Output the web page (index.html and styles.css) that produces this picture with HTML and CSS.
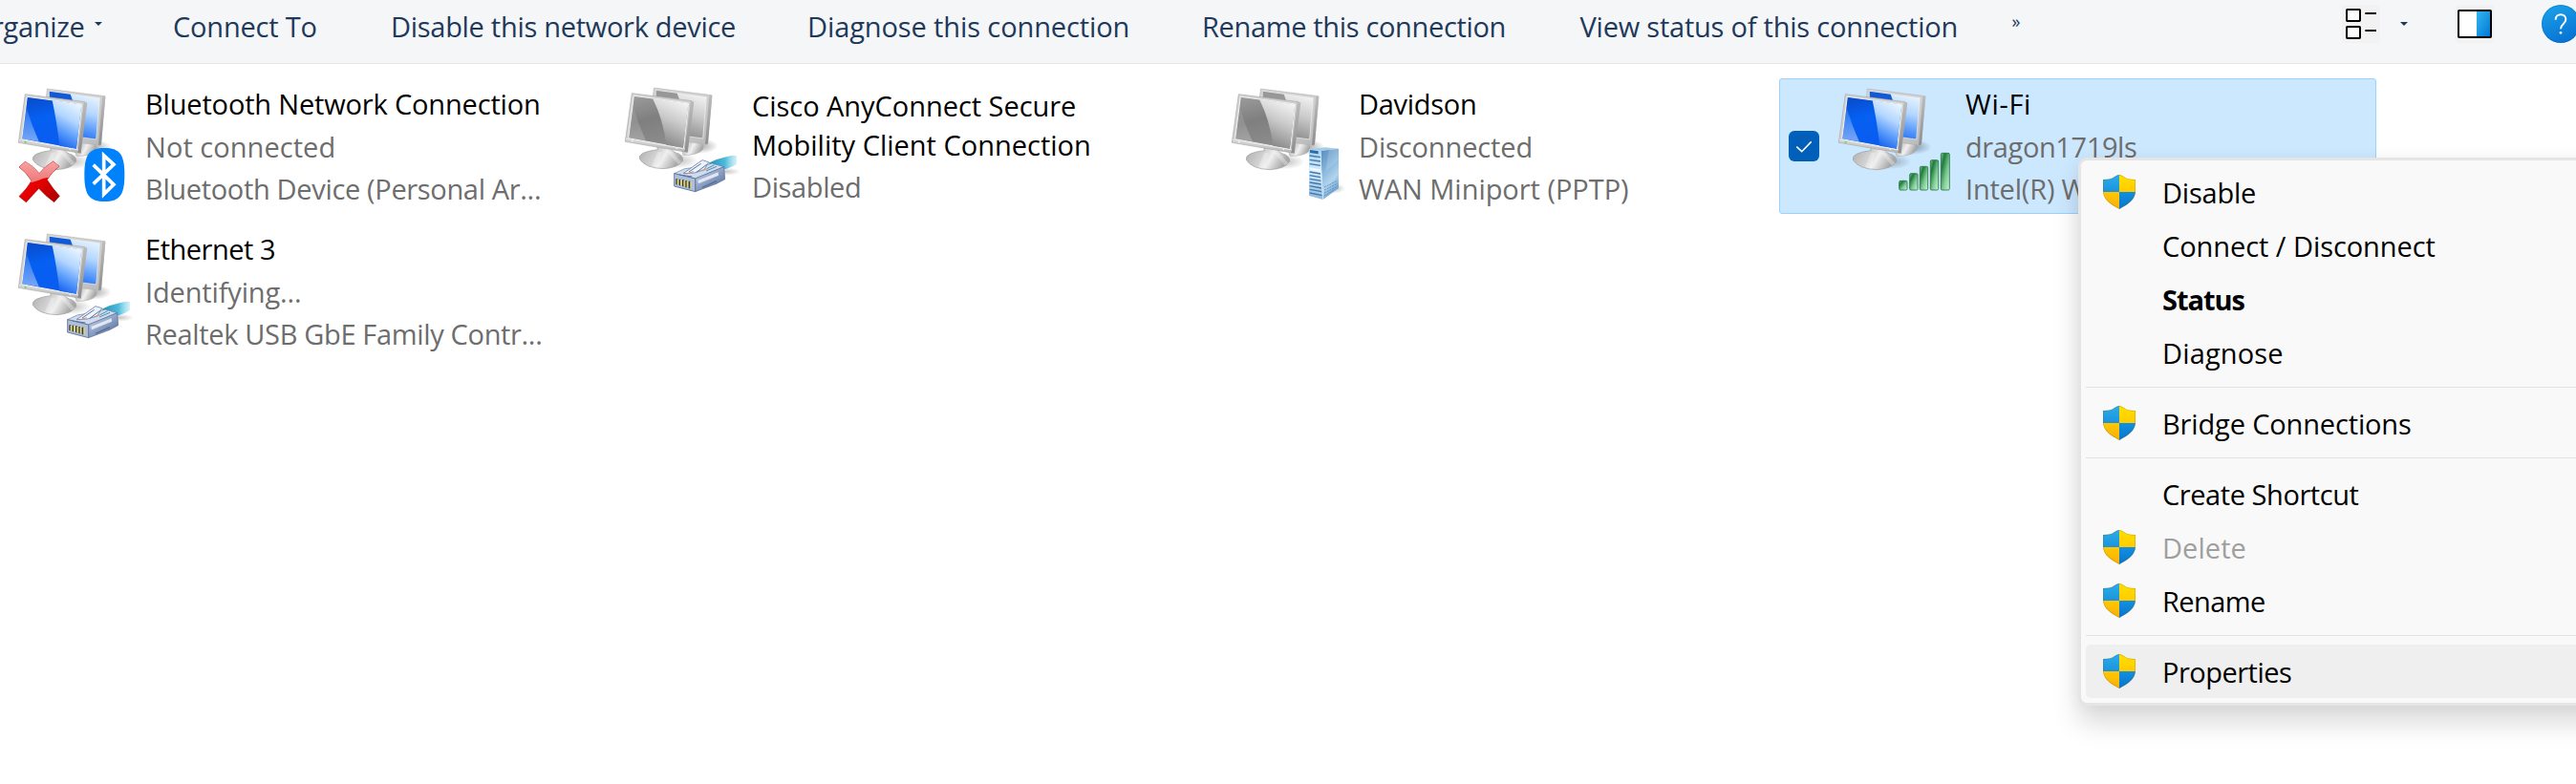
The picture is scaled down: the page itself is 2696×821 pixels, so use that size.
FILE: index.html
```html
<!DOCTYPE html>
<html lang="en">
<head>
<meta charset="utf-8">
<title>Network Connections</title>
<link rel="stylesheet" href="styles.css">
</head>
<body>
<svg class="defs" aria-hidden="true">
  <defs>
    <linearGradient id="scrDark" x1="0" y1="0" x2=".3" y2="1"><stop offset="0" stop-color="#0a49c4"/><stop offset=".45" stop-color="#0560f2"/><stop offset="1" stop-color="#0a5cf0"/></linearGradient>
    <linearGradient id="scrLite" x1=".6" y1="0" x2=".25" y2="1"><stop offset="0" stop-color="#e6f4ff"/><stop offset=".35" stop-color="#b3d6ff"/><stop offset=".65" stop-color="#5a9cfb"/><stop offset="1" stop-color="#0a57ec"/></linearGradient>
    <linearGradient id="gryDark" x1="0" y1="0" x2=".3" y2="1"><stop offset="0" stop-color="#9d9d9d"/><stop offset=".5" stop-color="#7f7f7f"/><stop offset="1" stop-color="#8c8c8c"/></linearGradient>
    <linearGradient id="gryLite" x1=".6" y1="0" x2=".25" y2="1"><stop offset="0" stop-color="#f2f2f2"/><stop offset=".4" stop-color="#cbcbcb"/><stop offset="1" stop-color="#7c7c7c"/></linearGradient>
    <linearGradient id="glint" x1="0" y1="0" x2="0" y2="1"><stop offset="0" stop-color="#fff" stop-opacity=".1"/><stop offset="1" stop-color="#fff" stop-opacity=".45"/></linearGradient>
    <linearGradient id="bezel" x1="0" y1="0" x2="1" y2="1"><stop offset="0" stop-color="#d4d4d4"/><stop offset=".6" stop-color="#cecece"/><stop offset="1" stop-color="#b5b5b5"/></linearGradient>
    <linearGradient id="side" x1="0" y1="0" x2="0" y2="1"><stop offset="0" stop-color="#bcbcbc"/><stop offset="1" stop-color="#8e8e8e"/></linearGradient>
    <linearGradient id="foot" x1="0" y1="0" x2="1" y2=".3"><stop offset="0" stop-color="#adadad"/><stop offset=".5" stop-color="#d6d6d6"/><stop offset=".65" stop-color="#f0f0f0"/><stop offset="1" stop-color="#a8a8a8"/></linearGradient>
    <radialGradient id="shade"><stop offset="0" stop-color="#000" stop-opacity=".5"/><stop offset="1" stop-color="#000" stop-opacity="0"/></radialGradient>
    <linearGradient id="redTop" x1="0" y1="0" x2="0" y2="1"><stop offset="0" stop-color="#f7a3a3"/><stop offset="1" stop-color="#e25050"/></linearGradient>
    <linearGradient id="redLow" x1="0" y1="0" x2="1" y2="1"><stop offset="0" stop-color="#ff0f0f"/><stop offset=".5" stop-color="#e60000"/><stop offset="1" stop-color="#a80000"/></linearGradient>
    <linearGradient id="cable" x1="0" y1="0" x2="1" y2="0"><stop offset="0" stop-color="#1c8fb6"/><stop offset=".6" stop-color="#4fbbdc"/><stop offset="1" stop-color="#a9e3f3" stop-opacity=".5"/></linearGradient>
    <linearGradient id="plugSide" x1="0" y1="0" x2=".8" y2="1"><stop offset="0" stop-color="#dbe5f4"/><stop offset=".5" stop-color="#93a6c9"/><stop offset="1" stop-color="#526a94"/></linearGradient>
    <linearGradient id="srvL" x1="0" y1="0" x2="0" y2="1"><stop offset="0" stop-color="#a8d2f0"/><stop offset=".45" stop-color="#d3e9f9"/><stop offset="1" stop-color="#8fb9dd"/></linearGradient>
    <linearGradient id="srvR" x1="0" y1="0" x2=".4" y2="1"><stop offset="0" stop-color="#5389bb"/><stop offset=".4" stop-color="#7fb0d8"/><stop offset=".75" stop-color="#b3d5ee"/><stop offset="1" stop-color="#6fa3cf"/></linearGradient>
    <linearGradient id="bar" x1="0" y1="0" x2="1" y2="1"><stop offset="0" stop-color="#7cc494"/><stop offset=".25" stop-color="#1f7a3a"/><stop offset=".6" stop-color="#7fcb95"/><stop offset="1" stop-color="#c9f7d4"/></linearGradient>
    <linearGradient id="shB1" x1="0" y1="0" x2="0" y2="1"><stop offset="0" stop-color="#2badea"/><stop offset="1" stop-color="#1b93dc"/></linearGradient>
    <linearGradient id="shB2" x1="0" y1="0" x2="0" y2="1"><stop offset="0" stop-color="#1490df"/><stop offset="1" stop-color="#0574ce"/></linearGradient>
    <linearGradient id="shY1" x1="0" y1="0" x2="0" y2="1"><stop offset="0" stop-color="#ffe000"/><stop offset="1" stop-color="#ffcb00"/></linearGradient>
    <linearGradient id="shY2" x1="0" y1="0" x2="0" y2="1"><stop offset="0" stop-color="#ffc800"/><stop offset="1" stop-color="#f9ae08"/></linearGradient>
    <linearGradient id="pane" x1="0" y1="0" x2="1" y2="1"><stop offset="0" stop-color="#35b8f1"/><stop offset="1" stop-color="#0074d4"/></linearGradient>
    <linearGradient id="help" x1=".3" y1="0" x2=".7" y2="1"><stop offset="0" stop-color="#1ba0e8"/><stop offset="1" stop-color="#0670d2"/></linearGradient>
    <clipPath id="shieldClip"><path d="M17 0C13 0 11 4.6 4.5 4.8L0 5.1V17C0 26 8 31 17 36C26 31 34 26 34 17V5.1L29.5 4.8C23 4.6 21 0 17 0Z"/></clipPath>
    <clipPath id="crossTop"><path d="M50 260H200V318Q150 312 122 326Q90 340 50 330Z"/></clipPath>

    <symbol id="shield" viewBox="0 0 34 36">
      <g clip-path="url(#shieldClip)">
        <rect width="17" height="18" fill="url(#shB1)"/>
        <rect x="17" width="17" height="18" fill="url(#shY1)"/>
        <rect y="18" width="17" height="18" fill="url(#shY2)"/>
        <rect x="17" y="18" width="17" height="18" fill="url(#shB2)"/>
        <path d="M17 0C13 0 11 4.6 4.5 4.8L0 5.1V17C0 26 8 31 17 36C26 31 34 26 34 17V5.1L29.5 4.8C23 4.6 21 0 17 0Z" fill="none" stroke="#7a5a00" stroke-opacity=".3" stroke-width="1.4"/>
      </g>
    </symbol>

    <g id="frameBack">
      <ellipse cx="292" cy="222" rx="58" ry="24" fill="url(#shade)" opacity=".7"/>
      <ellipse cx="225" cy="268" rx="62" ry="24" fill="url(#shade)" opacity=".5"/>
      <path d="M225 205H290Q306 220 302 232Q285 252 240 250Z" fill="url(#foot)" stroke="#a2a2a2" stroke-width="1.5"/>
      <path d="M148 39L330 62L316 217L250 208L140 120Z" fill="url(#bezel)" stroke="#a9a9a9" stroke-width="1.5"/>
      <path d="M322 62L331 64L318 214L309 217Z" fill="url(#side)"/>
    </g>
    <g id="frameFront">
      <path d="M158 222L205 230Q204 240 226 246Q242 256 238 268Q225 290 178 293Q120 291 103 262Q98 240 160 233Z" fill="url(#foot)" stroke="#9a9a9a" stroke-width="2"/>
      <path d="M190 240L225 280L235 272L205 240ZM160 240L140 285L160 290L172 240Z" fill="#fff" opacity=".3"/>
      <path d="M79 56L266 80L246 240L58 208Z" fill="url(#bezel)" stroke="#a8a8a8" stroke-width="2"/>
      <path d="M264 79L274 83L254 242L244 240Z" fill="url(#side)"/>
      <path d="M60 199L246 231" stroke="#e6e6e6" stroke-width="3"/>
    </g>
    <g id="pcBlue">
      <use href="#frameBack"/>
      <path d="M155 47L313 68L302 198L252 191L262 82L160 66Z" fill="url(#scrLite)" stroke="#f1f1f1" stroke-width="2"/>
      <path d="M155 47L221 56L228 76L156 66Z" fill="#1259d6"/>
      <use href="#frameFront"/>
      <path d="M85 64L257 87L241 229L68 197Z" fill="url(#scrDark)" stroke="#f3f3f3" stroke-width="3"/>
      <path d="M164 75L256 88L240 227L187 218Q178 140 164 75Z" fill="url(#scrLite)"/>
      <path d="M81 92Q98 150 122 204L70 196Z" fill="url(#glint)"/>
      <circle cx="80" cy="206" r="3" fill="#4fe22c"/><circle cx="220" cy="229" r="2.5" fill="#f8f8f8"/>
    </g>
    <g id="pcGray">
      <use href="#frameBack"/>
      <path d="M155 47L313 68L302 198L252 191L262 82L160 66Z" fill="url(#gryLite)" stroke="#f1f1f1" stroke-width="2"/>
      <path d="M155 47L221 56L228 76L156 66Z" fill="#979797"/>
      <use href="#frameFront"/>
      <path d="M85 64L257 87L241 229L68 197Z" fill="url(#gryDark)" stroke="#f3f3f3" stroke-width="3"/>
      <path d="M144 72L256 88L240 227L187 218Q178 140 144 72Z" fill="url(#gryLite)"/>
      <path d="M81 92Q98 150 122 204L70 196Z" fill="url(#glint)" opacity=".5"/>
      <circle cx="80" cy="206" r="2.5" fill="#f8f8f8"/><circle cx="220" cy="229" r="2.5" fill="#f8f8f8"/>
    </g>
    <g id="plug">
      <ellipse cx="375" cy="302" rx="45" ry="12" fill="url(#shade)" opacity=".45"/>
      <path d="M318 276Q345 262 375 256Q395 249 408 252V278Q388 292 365 296Z" fill="url(#cable)"/>
      <path d="M212 308L245 293L300 286L330 276L368 287L278 324Z" fill="#cfdcee" stroke="#667ca5" stroke-width="2"/>
      <path d="M278 324L368 287L371 326L345 340L278 365Z" fill="url(#plugSide)" stroke="#546a94" stroke-width="2"/>
      <path d="M212 308L278 324V365L212 348Z" fill="#aebfdc" stroke="#546a94" stroke-width="2.5"/>
      <path d="M286 330L350 304L351 314L288 340Z" fill="#f3f8fe" opacity=".8"/>
      <path d="M300 352L345 332" stroke="#3f5682" stroke-width="4" opacity=".6"/>
      <path d="M220 325V343M230 326V346M240 328V349M250 330V352M260 332V355" stroke="#3b3d2b" stroke-width="6"/>
      <path d="M223 326V343M233 327V346M243 329V349M253 331V352M264 333V355" stroke="#e6d96a" stroke-width="4"/>
      <path d="M240 308L300 266L320 272L306 296L276 306Z" fill="#edf3fb" stroke="#6b82ac" stroke-width="2.5"/>
      <path d="M258 303L296 277M282 304L314 280M228 312L268 318" stroke="#5b739f" stroke-width="3"/>
      <path d="M250 309L272 302M296 300L318 292" stroke="#d98b6f" stroke-width="3"/>
      <path d="M312 300L345 286M316 292L338 281" stroke="#4b93ab" stroke-width="3"/>
    </g>
    <g id="server">
      <ellipse cx="380" cy="352" rx="34" ry="16" fill="url(#shade)" opacity=".5"/>
      <path d="M336 233L393 227V351L344 387Z" fill="url(#srvR)"/>
      <path d="M300 228L337 233L344 387L300 375Z" fill="url(#srvL)"/>
      <path d="M300 228L352 223L393 227L337 234Z" fill="#a4cdeb"/>
      <path d="M303 231L329 235V244L303 240Z" fill="#2d6ba6"/>
      <path d="M302 249L336 254M302 262L336 267M302 275L336 280M302 300L336 306M302 311L336 317M302 322L338 328M302 333L338 339M302 344L339 351M302 355L340 362M302 366L341 374" stroke="#3f78ab" stroke-width="4"/>
      <path d="M302 286L336 292V300L302 294Z" fill="#eef8ff"/>
      <path d="M348 348L388 328M348 357L388 337M348 366L388 346M348 375L380 356" stroke="#5b92c3" stroke-width="3" stroke-dasharray="6 3"/>
      <path d="M337 234V300L344 387" stroke="#dff1ff" stroke-width="2" fill="none"/>
      <path d="M362 232L352 300L392 262V228Z" fill="#fff" opacity=".15"/>
    </g>
    <path id="cross" d="M60 285L79 268Q103 280 123 305Q142 282 167 267L186 283Q160 302 148 325Q165 352 187 376L170 395Q142 375 122 352Q104 372 82 395L60 377Q86 352 99 328Q82 300 60 285Z"/>
    <g id="btLogo">
      <path d="M328 225C375 225 391 244 391 309S375 393 328 393S265 374 265 309S281 225 328 225Z" fill="#0082fc"/>
      <path d="M293 278L357 340L326 370V248L357 277L293 338" fill="none" stroke="#fff" stroke-width="11"/>
    </g>
    <g id="signal" fill="url(#bar)" stroke="#27753d" stroke-width="2.5">
      <rect x="248" y="328" width="25" height="29" rx="4"/>
      <rect x="281" y="305" width="25" height="52" rx="4"/>
      <rect x="313" y="283" width="25" height="74" rx="4"/>
      <rect x="346" y="263" width="25" height="94" rx="4"/>
      <rect x="379" y="241" width="27" height="116" rx="4"/>
    </g>
  </defs>
</svg>

<header class="toolbar">
  <div class="cmd organize"><span>rganize</span><svg class="caret" viewBox="0 0 8 4"><path d="M0 0H8L4 4Z"/></svg></div>
  <div class="cmd s-connect">Connect To</div>
  <div class="cmd s-disable">Disable this network device</div>
  <div class="cmd s-diagnose">Diagnose this connection</div>
  <div class="cmd s-rename">Rename this connection</div>
  <div class="cmd s-view">View status of this connection</div>
  <div class="cmd more">»</div>
  <div class="tool"><svg width="40" height="40" viewBox="0 0 120 120"><rect width="120" height="120" rx="8" fill="#f2f2f2"/><g fill="#fff" stroke="#000" stroke-width="6"><rect x="15" y="15" width="42" height="36" rx="2"/><rect x="15" y="69" width="42" height="36" rx="2"/><path d="M73 27H108M73 81H108"/></g></svg></div>
  <div class="tool drop"><svg class="caret" viewBox="0 0 8 4"><path d="M0 0H8L4 4Z"/></svg></div>
  <div class="tool"><svg width="40" height="40" viewBox="0 0 120 120"><rect width="120" height="120" rx="8" fill="#f2f2f2"/><rect x="9" y="18" width="102" height="84" rx="2" fill="#fff"/><path d="M66 18H111V102H66Z" fill="url(#pane)"/><rect x="9" y="18" width="102" height="84" rx="2" fill="none" stroke="#000" stroke-width="6"/></svg></div>
  <div class="tool"><svg width="40" height="40" viewBox="0 0 120 120"><circle cx="60" cy="60" r="60" fill="url(#help)"/><circle cx="60" cy="60" r="58" fill="none" stroke="#0563b5" stroke-opacity=".35" stroke-width="3"/><path d="M44 47C44 25 76 26 76 46C76 60 60 60 60 76" fill="none" stroke="#fff" stroke-width="6"/><circle cx="60" cy="88" r="4" fill="#fff"/></svg></div>
</header>

<main class="connections">
  <article class="tile">
    <svg class="icon" viewBox="36 12 384 408"><use href="#pcBlue"/><use href="#cross" fill="url(#redLow)" stroke="#9c1111" stroke-width="2"/><use href="#cross" fill="url(#redTop)" clip-path="url(#crossTop)"/><use href="#btLogo"/></svg>
    <div class="info"><p class="name s-btname">Bluetooth Network Connection</p><p class="s-notconn">Not connected</p><p class="s-btdev">Bluetooth Device (Personal Ar...</p></div>
  </article>
  <article class="tile">
    <svg class="icon raised" viewBox="36 12 384 408"><use href="#pcGray"/><use href="#plug"/></svg>
    <div class="info"><div class="name double"><p class="s-cisco">Cisco AnyConnect Secure</p><p>Mobility Client Connection</p></div><p class="s-disabled">Disabled</p></div>
  </article>
  <article class="tile">
    <svg class="icon" viewBox="36 12 384 408"><use href="#pcGray"/><use href="#server"/></svg>
    <div class="info"><p class="name s-david">Davidson</p><p class="s-disc">Disconnected</p><p class="s-wan">WAN Miniport (PPTP)</p></div>
  </article>
  <article class="tile selected">
    <svg class="check" viewBox="0 0 32 32"><path d="M8.3 16.7L13.7 21.7L23.7 11.4"/></svg>
    <svg class="icon" viewBox="36 12 384 408"><use href="#pcBlue"/><use href="#signal"/></svg>
    <div class="info"><p class="name s-wifi">Wi-Fi</p><p class="s-dragon">dragon1719ls</p><p class="s-intel">Intel(R) Wi-Fi</p></div>
  </article>
  <article class="tile">
    <svg class="icon" viewBox="36 12 384 408"><use href="#pcBlue"/><use href="#plug"/></svg>
    <div class="info"><p class="name s-eth">Ethernet 3</p><p class="s-ident">Identifying...</p><p class="s-realtek">Realtek USB GbE Family Contr...</p></div>
  </article>
</main>

<nav class="menu">
  <div class="item"><svg class="shield"><use href="#shield"/></svg><span class="m-disable">Disable</span></div>
  <div class="item"><span class="m-connect">Connect / Disconnect</span></div>
  <div class="item default"><span class="m-status">Status</span></div>
  <div class="item"><span class="m-diagnose">Diagnose</span></div>
  <hr>
  <div class="item"><svg class="shield"><use href="#shield"/></svg><span class="m-bridge">Bridge Connections</span></div>
  <hr>
  <div class="item"><span class="m-shortcut">Create Shortcut</span></div>
  <div class="item disabled"><svg class="shield"><use href="#shield"/></svg><span class="m-delete">Delete</span></div>
  <div class="item"><svg class="shield"><use href="#shield"/></svg><span class="m-rename">Rename</span></div>
  <hr>
  <div class="item hover"><svg class="shield"><use href="#shield"/></svg><span class="m-props">Properties</span></div>
</nav>
</body>
</html>
```
FILE: styles.css
```css
* { box-sizing: border-box; }
body {
  margin: 0;
  height: 821px;
  position: relative;
  overflow: hidden;
  background: #fff;
  color: #000;
  font: 29px "Open Sans", "Noto Sans", sans-serif;
  white-space: nowrap;
}
p { margin: 0; }
.defs { display: block; width: 0; height: 0; }

.toolbar {
  display: grid;
  grid-template-columns: 181px 228px 436px 413px 395.5px 452px 345.5px 61px 58px 90px 40px;
  height: 67px;
  background: #f5f6f8;
  border-bottom: 1px solid #e4e6ea;
  color: #1e395b;
}
.cmd { line-height: 55px; }
.organize { display: flex; justify-content: flex-end; padding-right: 74.5px; letter-spacing: -.3px; }
.organize .caret { flex: none; margin: 23px 0 0 10px; }
.caret { display: block; width: 8px; height: 4px; fill: #1e395b; }
.more { font-size: 18px; line-height: 44px; }
.tool { padding-top: 5px; height: 45px; }
.tool svg { display: block; }
.tool.drop { padding-top: 23px; }
.s-connect { letter-spacing: -.19px; }
.s-disable { letter-spacing: -.29px; }
.s-diagnose { letter-spacing: -.11px; }
.s-rename { letter-spacing: -.34px; }
.s-view { letter-spacing: -.22px; }

.connections {
  display: grid;
  grid-template-columns: repeat(4, 625px);
  grid-auto-rows: 142px;
  gap: 10px;
  margin-left: -43px;
  padding-top: 15px;
}
.tile {
  display: grid;
  grid-template-columns: 45px 140px auto;
  border: 1px solid transparent;
  border-radius: 3px;
  padding: 0 0 0 9px;
}
.tile.selected { background: #cce8ff; border-color: #99d1ff; }
.check {
  grid-column: 1;
  align-self: center;
  width: 32px;
  height: 32px;
  border-radius: 6px;
  background: #005fb8;
  fill: none;
  stroke: #fff;
  stroke-width: 1.6;
}
.icon { grid-column: 2; grid-row: 1; width: 128px; height: 136px; margin-top: 1px; }
.icon.raised { margin-top: 0; }
.info { grid-column: 3; grid-row: 1; padding-top: 4px; line-height: 44.5px; color: #6d6d6d; }
.name { color: #000; }
.name.double { line-height: 41px; padding: 2.5px 0 2px; }
.s-btname { letter-spacing: -.17px; }
.s-notconn { letter-spacing: .05px; }
.s-btdev, .s-realtek { letter-spacing: -.34px; }
.s-cisco, .s-wan { letter-spacing: -.04px; }
.s-disabled { letter-spacing: -.38px; }
.s-david { letter-spacing: -.28px; }
.s-disc { letter-spacing: -.13px; }
.s-wifi { letter-spacing: .65px; }
.s-dragon { letter-spacing: -.39px; }
.s-intel { letter-spacing: -.2px; }
.s-eth { letter-spacing: -.48px; }
.s-ident { letter-spacing: -.15px; }

.menu {
  position: absolute;
  left: 2175px;
  top: 165px;
  width: 560px;
  height: 574px;
  padding: 5px;
  border: 3px solid #e5e5e5;
  border-radius: 9px;
  background: #f9f9f9;
  box-shadow: 0 18px 28px rgba(0, 0, 0, .15), 0 0 18px rgba(0, 0, 0, .04);
}
.item {
  display: grid;
  grid-template-columns: 62px auto;
  align-items: center;
  height: 56px;
  padding-left: 18px;
  border-radius: 5px;
}
.item span { grid-column: 2; padding-top: 1px; }
.item.default { font-weight: 700; }
.item.disabled { color: #9f9f9f; }
.item.hover { background: #efefef; }
.shield { width: 34px; height: 36px; }
.menu hr { margin: 8px 0 9px; border: 0; height: 1px; background: #e3e3e3; }
.m-disable { letter-spacing: -.23px; }
.m-connect { letter-spacing: -.06px; }
.m-status { letter-spacing: -1.05px; }
.m-diagnose { letter-spacing: .15px; }
.m-bridge { letter-spacing: -.15px; }
.m-shortcut { letter-spacing: -.44px; }
.m-delete { letter-spacing: .05px; }
.m-rename { letter-spacing: -.59px; }
.m-props { letter-spacing: -.51px; }
```
